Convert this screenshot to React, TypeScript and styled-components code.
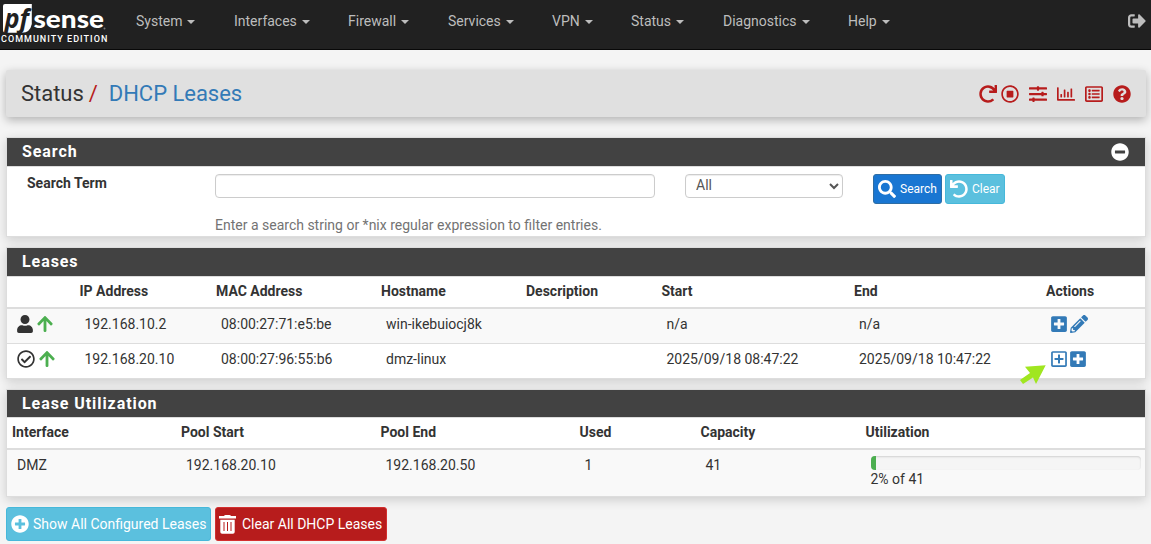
import React from "react";
import styled, { createGlobalStyle, css } from "styled-components";
import {
  FaRedo, FaUndo, FaRegStopCircle, FaSlidersH, FaRegChartBar, FaRegListAlt, FaQuestionCircle, FaMinusCircle,
  FaSearch, FaUser, FaArrowUp, FaRegCheckCircle, FaPlusSquare, FaRegPlusSquare,
  FaPencilAlt, FaPlusCircle, FaSignOutAlt,
} from "react-icons/fa";

const Global = createGlobalStyle`
  * { box-sizing: border-box; }
  body {
    margin: 0; background: #f4f4f4; color: #333; overflow: hidden;
    font: 14px/20px Roboto, sans-serif; letter-spacing: 0;
  }
  svg { display: block; flex: none; }
`;

const Navbar = styled.header`
  height: 50px; background: #212121; border-bottom: 1px solid #080808;
  display: flex; align-items: stretch; color: #bdbdbd;
`;
const Brand = styled.div`
  width: 121px; padding-top: 4px;
`;
const LogoArt = styled.svg`overflow: visible;`;
const Edition = styled.div`
  color: #fff; font: 500 9px/10px Roboto, sans-serif; letter-spacing: 1.03px; white-space: nowrap; padding-left: 1px;
`;
const NavItem = styled.a<{ $w: number }>`
  display: flex; align-items: center; width: ${p => p.$w}px; padding: 0 0 7px 15px; white-space: nowrap;
`;
const Caret = styled.span`
  margin: 2px 0 0 5px; border: 4px solid transparent; border-top-color: currentColor; border-bottom: 0;
`;
const Logout = styled.a`
  margin: 12px 5px 0 auto;
`;

const Page = styled.main`padding: 20px 5px 0 6px;`;
const card = css`box-shadow: 0 3px 10px rgba(0, 0, 0, 0.16);`;
const TitleBar = styled.div`
  height: 47px; background: #e0e0e0; border-radius: 2px; box-shadow: 0 3px 10px rgba(0, 0, 0, 0.28);
  display: flex; align-items: center; justify-content: space-between; padding: 0 15px; margin-bottom: 20px;
`;
const Crumbs = styled.h1`
  margin: 0; font-size: 22px; line-height: 24px; font-weight: 400; letter-spacing: -0.03px;
  i { font-style: normal; color: #b71c1c; margin: 0 11px 0 5px; }
  a { color: #337ab7; }
`;
const Tools = styled.div`
  display: flex; align-items: center; color: #b71c1c; gap: 10px; padding-top: 1px;
  > :first-child { margin-right: -6px; }
`;

const Panel = styled.section<{ $h: number }>`
  ${card}
  height: ${p => p.$h}px; background: #fff; border: 1px solid #ddd; margin-bottom: 10px;
`;
const PanelHead = styled.h2<{ $h?: number }>`
  margin: 0; height: ${p => p.$h ?? 29}px; background: #424242; color: #fff; border-bottom: 1px solid #ddd;
  padding: 0 16px 0 15px; display: flex; align-items: center; justify-content: space-between;
  font-size: 16px; font-weight: 700; letter-spacing: 0.93px; line-height: 28px;
`;
const Form = styled.div`
  display: grid; grid-template-columns: 178px 440px 158px 1fr; column-gap: 30px; padding-top: 7px;
`;
const Label = styled.label`font-weight: 700; padding-left: 20px; margin-top: -1px;`;
const Input = styled.input`
  height: 24px; width: 440px; border: 1px solid #ccc; border-radius: 4px; background: #fff;
  box-shadow: inset 0 1px 1px rgba(0, 0, 0, 0.075);
`;
const Select = styled.select`
  height: 24px; width: 158px; border: 1px solid #ccc; border-radius: 4px; background: #fff; color: #555;
  font: 14px Roboto, sans-serif; padding: 0 0 2px 6px; box-shadow: inset 0 1px 1px rgba(0, 0, 0, 0.075);
`;
const Help = styled.p`grid-column: 2 / 5; margin: 11px 0 0; color: #737373;`;
const Row = styled.div<{ $gap: number }>`display: flex; align-items: center; gap: ${p => p.$gap}px;`;
const Narrow = styled.span<{ $color?: string }>`margin: 0 -1px; color: ${p => p.$color ?? "inherit"};`;
const Button = styled.button<{ $bg: string; $line: string; $w: number; $small?: boolean }>`
  display: flex; align-items: center; gap: 4px; white-space: nowrap; color: #fff;
  width: ${p => p.$w}px; height: ${p => (p.$small ? 30 : 34)}px; padding: 0 0 0 4px;
  background: ${p => p.$bg}; border: 1px solid ${p => p.$line}; border-radius: 3px;
  font: ${p => (p.$small ? 12 : 14)}px Roboto, sans-serif;
`;

const Table = styled.table`
  width: 100%; border-collapse: separate; border-spacing: 0; table-layout: fixed;
  th { height: 32px; padding: 0 5px 2px; text-align: left; border-bottom: 2px solid #ddd; }
  td { height: 35px; padding: 0 10px 4px; vertical-align: middle; white-space: nowrap; border-top: 1px solid #ddd; }
  tbody tr:first-child td { height: 34px; border-top: 0; background: #f9f9f9; }
`;
const UtilCell = styled.td`
  tbody tr:first-child && { height: 46px; padding: 6px 4px 0 10px; vertical-align: top; }
`;
const TopCell = styled.td`
  tbody tr:first-child && { height: 46px; padding-top: 5px; vertical-align: top; }
`;
const Track = styled.div`
  height: 14px; background: #f5f5f5; border-radius: 4px; overflow: hidden;
  box-shadow: inset 0 1px 2px rgba(0, 0, 0, 0.15);
`;
const Fill = styled.div`height: 100%; width: 2%; background: #4caf50;`;
const UtilText = styled.div`margin-top: -1px;`;
const Cursor = styled.svg`position: absolute; left: 1019px; top: 364px;`;

function Logo() {
  return (
    <LogoArt width="110" height="30" viewBox="0 0 110 30">
      <path d="M5 0H31.800V20Q30 28.800 22 28.800H5.500Q3 28.800 3 26V2Q3 0 5 0Z" fill="#fff" />
      <text x="4.500" y="24" fontFamily="Open Sans" fontStyle="italic" fontWeight="700" fontSize="27" fill="#212121" textLength="24.500" lengthAdjust="spacingAndGlyphs">pf</text>
      <text x="33.500" y="24" fontFamily="Lato" fontWeight="900" fontSize="25.500" fill="#fff" textLength="70.500" lengthAdjust="spacingAndGlyphs">sense</text>
      <circle cx="104.500" cy="24.500" r="1" fill="#777" />
    </LogoArt>
  );
}
const Trash = () => (
  <svg width="18" height="19" viewBox="0 0 18 19" fill="#fff">
    <path d="M0 1H5Q5.500 0 6.500 0h4Q11.500 0 12 1h5v2.500H0zM1.300 4.700h14.400v12.300q0 1.800-1.800 1.800H3.100Q1.300 18.800 1.300 17z" />
    <path d="M5 7v9M8.500 7v9M12 7v9" stroke="#b71c1c" />
  </svg>
);

const menu: [string, number][] = [["System", 98], ["Interfaces", 114], ["Firewall", 100], ["Services", 104], ["VPN", 79], ["Status", 92], ["Diagnostics", 125], ["Help", 80]];
const leaseCols: [string, number][] = [["", 67.5], ["IP Address", 136.5], ["MAC Address", 165], ["Hostname", 145], ["Description", 135.5], ["Start", 192.5], ["End", 192], ["Actions", 104]];
const utilCols: [string, number][] = [["Interface", 169], ["Pool Start", 199.5], ["Pool End", 199], ["Used", 121], ["Capacity", 165], ["Utilization", 284.5]];

const Head = ({ cols }: { cols: [string, number][] }) => (
  <>
    <colgroup>{cols.map(([n, w]) => <col key={n} style={{ width: w }} />)}</colgroup>
    <thead><tr>{cols.map(([n]) => <th key={n}>{n}</th>)}</tr></thead>
  </>
);

export default function App() {
  return (
    <>
      <Global />
      <Navbar>
        <Brand><Logo /><Edition>COMMUNITY EDITION</Edition></Brand>
        {menu.map(([n, w]) => <NavItem key={n} $w={w}>{n}<Caret /></NavItem>)}
        <Logout><FaSignOutAlt size={18} /></Logout>
      </Navbar>
      <Page>
        <TitleBar>
          <Crumbs>Status<i>/</i><a>DHCP Leases</a></Crumbs>
          <Tools>
            <FaRedo size={18} /><FaRegStopCircle size={18} /><FaSlidersH size={18} /><FaRegChartBar size={18} />
            <FaRegListAlt size={18} /><FaQuestionCircle size={18} />
          </Tools>
        </TitleBar>
        <Panel $h={100}>
          <PanelHead>Search<FaMinusCircle size={18} /></PanelHead>
          <Form>
            <Label>Search Term</Label>
            <Input />
            <Select><option>All</option></Select>
            <Row $gap={3}>
              <Button $small $w={69} $bg="#1976d2" $line="#2e6da4"><FaSearch size={18} />Search</Button>
              <Button $small $w={60} $bg="#5bc0de" $line="#46b8da"><FaUndo size={18} />Clear</Button>
            </Row>
            <Help>Enter a search string or *nix regular expression to filter entries.</Help>
          </Form>
        </Panel>
        <Panel $h={132}>
          <PanelHead>Leases</PanelHead>
          <Table>
            <Head cols={leaseCols} />
            <tbody>
              <tr>
                <td>
                  <Row $gap={4}>
                    <Narrow><FaUser size={18} /></Narrow>
                    <Narrow $color="#4caf50"><FaArrowUp size={18} /></Narrow>
                  </Row>
                </td>
                <td>192.168.10.2</td><td>08:00:27:71:e5:be</td><td>win-ikebuiocj8k</td><td /><td>n/a</td><td>n/a</td>
                <td>
                  <Row $gap={3}>
                    <Narrow $color="#337ab7"><FaPlusSquare size={18} /></Narrow>
                    <FaPencilAlt size={18} color="#337ab7" />
                  </Row>
                </td>
              </tr>
              <tr>
                <td>
                  <Row $gap={4}>
                    <FaRegCheckCircle size={18} />
                    <Narrow $color="#4caf50"><FaArrowUp size={18} /></Narrow>
                  </Row>
                </td>
                <td>192.168.20.10</td><td>08:00:27:96:55:b6</td><td>dmz-linux</td><td />
                <td>2025/09/18 08:47:22</td><td>2025/09/18 10:47:22</td>
                <td>
                  <Row $gap={3}>
                    <Narrow $color="#337ab7"><FaRegPlusSquare size={18} /></Narrow>
                    <Narrow $color="#337ab7"><FaPlusSquare size={18} /></Narrow>
                  </Row>
                </td>
              </tr>
            </tbody>
          </Table>
        </Panel>
        <Panel $h={108}>
          <PanelHead $h={28}>Lease Utilization</PanelHead>
          <Table>
            <Head cols={utilCols} />
            <tbody><tr>
              <TopCell>DMZ</TopCell><TopCell>192.168.20.10</TopCell><TopCell>192.168.20.50</TopCell>
              <TopCell>1</TopCell><TopCell>41</TopCell>
              <UtilCell><Track><Fill /></Track><UtilText>2% of 41</UtilText></UtilCell>
            </tr></tbody>
          </Table>
        </Panel>
        <Row $gap={4}>
          <Button $w={205} $bg="#5bc0de" $line="#46b8da"><FaPlusCircle size={18} />Show All Configured Leases</Button>
          <Button $w={172} $bg="#b71c1c" $line="#d32f2f"><Narrow><Trash /></Narrow><Narrow />Clear All DHCP Leases</Button>
        </Row>
      </Page>
      <Cursor width="28" height="21" viewBox="0 0 28 21"><path d="M26.700 1.300 6 2.700l5 6.300L1 16l3 4 10-6.500 3 6.500z" fill="#a0e620" /></Cursor>
    </>
  );
}
